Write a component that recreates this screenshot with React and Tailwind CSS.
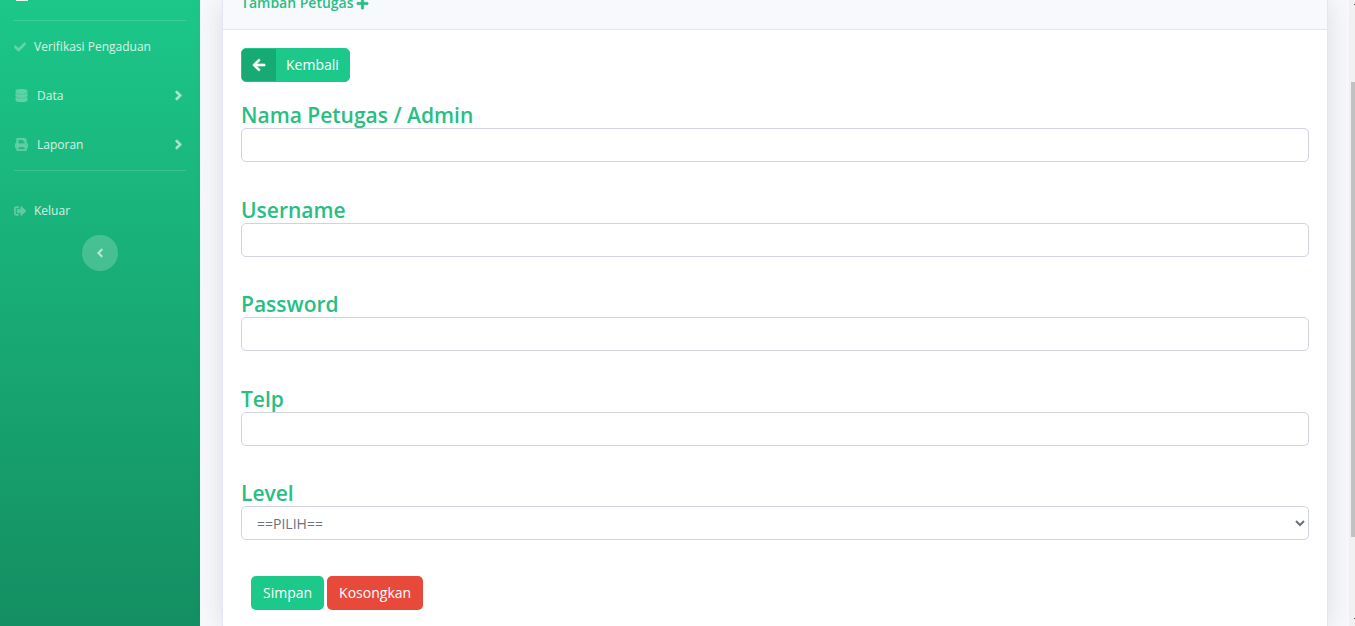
import {
  FaAngleLeft,
  FaAngleRight,
  FaArrowLeft,
  FaCheck,
  FaDatabase,
  FaPlus,
  FaPrint,
  FaSignOutAlt,
} from "react-icons/fa";

const fields = [
  { id: "nama", label: "Nama Petugas / Admin", type: "text" },
  { id: "username", label: "Username", type: "text" },
  { id: "password", label: "Password", type: "password" },
  { id: "telp", label: "Telp", type: "tel" },
];

const labelStyle = "block h-[26px] text-[21px] leading-[26px] font-semibold text-[#28be84]";
const controlStyle =
  "block h-[34px] w-full rounded-[5px] border border-[#d1d3e2] bg-white text-[14px] text-[#6e707e] outline-none";
const buttonStyle = "h-[34px] rounded-[5px] px-3 pb-0.5 text-[14px] text-white";

function NavLink({ icon: Icon, children, wide = false, chevron = false }) {
  return (
    <a href="#" className="flex h-[49px] items-center pr-[18px] pl-[14px] text-[12px] text-white/80">
      <span className={wide ? "flex w-[23px] pl-px" : "flex w-[20px]"}>
        <Icon strokeWidth={24} className={wide ? "size-[13px] text-white opacity-30" : "size-[12px] text-white opacity-30"} />
      </span>
      <span className="grow">{children}</span>
      {chevron && <FaAngleRight strokeWidth={20} className="-mr-1 size-[15px] text-white opacity-60" />}
    </a>
  );
}

function Sidebar() {
  return (
    <nav className="w-[200px] shrink-0 overflow-hidden bg-[linear-gradient(180deg,#1cc88a_-10px,#13855c_728px)]">
      <div className="flex h-[20px] items-start pl-4">
        <span className="h-px w-3 bg-white/90" />
      </div>
      <hr className="mx-[14px] border-white/15" />
      <div className="pt-px">
        <NavLink icon={FaCheck}>Verifikasi Pengaduan</NavLink>
        <NavLink icon={FaDatabase} wide chevron>Data</NavLink>
        <NavLink icon={FaPrint} wide chevron>Laporan</NavLink>
      </div>
      <hr className="mx-[14px] mt-px border-white/15" />
      <div className="pt-[15px]">
        <NavLink icon={FaSignOutAlt}>Keluar</NavLink>
      </div>
      <button
        type="button"
        aria-label="Ciutkan menu"
        className="mx-auto flex size-9 items-center justify-center rounded-full bg-white/20 text-white/60"
      >
        <FaAngleLeft className="size-[14px]" />
      </button>
    </nav>
  );
}

function ScrollTrack() {
  return (
    <div className="flex w-[6px] shrink-0 flex-col bg-[#f1f1f1] pl-[2px]">
      <div className="flex h-[82px] items-start justify-end pt-1">
        <span className="size-px bg-[#505050]" />
      </div>
      <div className="h-[455px] bg-[#c1c1c1]" />
      <div className="flex grow items-end justify-end pb-[7px]">
        <span className="size-px bg-[#505050]" />
      </div>
    </div>
  );
}

export default function App() {
  return (
    <div className="flex h-screen overflow-hidden bg-[#f8f9fc] font-['Open_Sans',sans-serif]">
      <Sidebar />
      <main className="flex min-w-0 grow flex-col pr-[21px] pl-[22px]">
        <section className="grow border-x border-[#e3e6f0] bg-white shadow-[0_2px_25px_rgba(58,59,69,0.15)]">
          <header className="flex h-[30px] items-start border-b border-[#e3e6f0] bg-[#f8f9fc] px-[18px]">
            <h6 className="-mt-[6px] flex items-center gap-0.5 text-[14px] leading-[18px] font-semibold text-[#28be84]">
              Tambah Petugas <FaPlus strokeWidth={20} className="size-[13px]" />
            </h6>
          </header>
          <div className="px-[18px] pt-[18px]">
            <a
              href="#"
              className="flex h-[34px] w-fit items-stretch overflow-hidden rounded-[5px] border border-[#1cc88a] bg-[#1cc88a] text-[14px] text-white"
            >
              <span className="flex w-[34px] items-center justify-center bg-black/15">
                <FaArrowLeft strokeWidth={20} className="size-[14px]" />
              </span>
              <span className="flex items-center px-[10px] pb-0.5">Kembali</span>
            </a>
            <form className="mt-[20px]">
              <div className="flex h-[438px] flex-col justify-between">
                {fields.map((f) => (
                  <div key={f.id}>
                    <label htmlFor={f.id} className={labelStyle}>{f.label}</label>
                    <input id={f.id} type={f.type} className={`${controlStyle} px-[11px]`} />
                  </div>
                ))}
                <div>
                  <label htmlFor="level" className={labelStyle}>Level</label>
                  <select id="level" className={`${controlStyle} px-[11px]`}>
                    <option>==PILIH==</option>
                  </select>
                </div>
              </div>
              <div className="flex gap-[3px] pt-[36px] pl-[10px]">
                <button type="submit" className={`${buttonStyle} bg-[#1cc88a]`}>
                  Simpan
                </button>
                <button type="reset" className={`${buttonStyle} bg-[#e74a3b]`}>
                  Kosongkan
                </button>
              </div>
            </form>
          </div>
        </section>
      </main>
      <ScrollTrack />
    </div>
  );
}
